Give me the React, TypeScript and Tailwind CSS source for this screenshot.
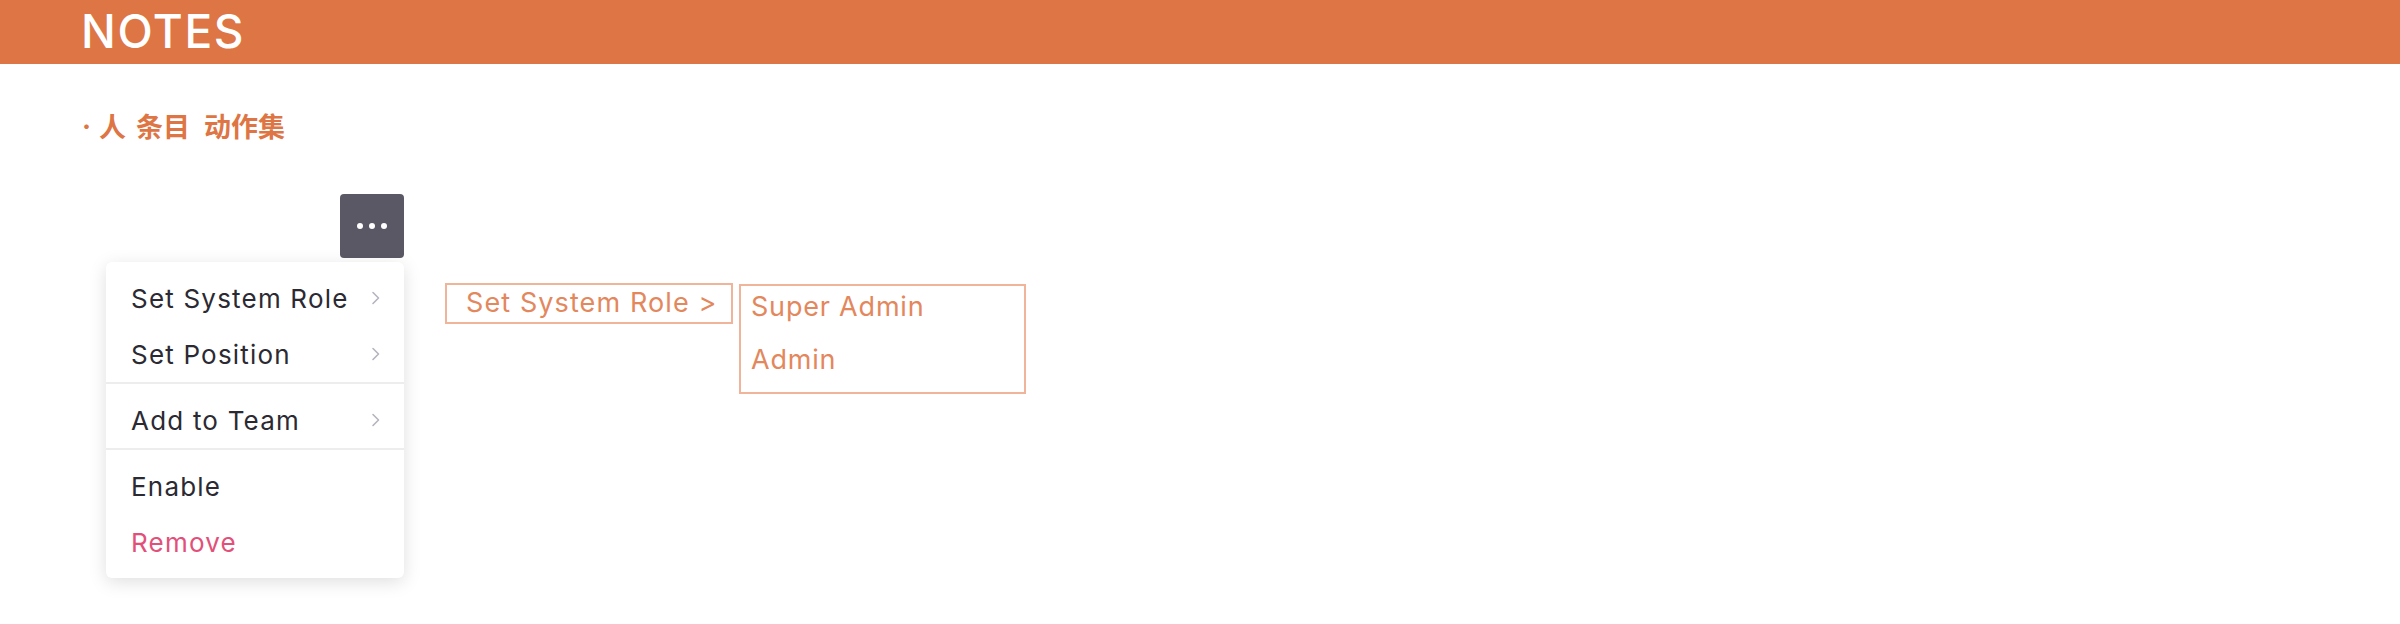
import React from "react";

const latin = { fontFamily: "Inter, 'Noto Sans CJK SC', sans-serif" };

function Chevron() {
  return (
    <svg width="10" height="14" viewBox="0 0 10 14" fill="none">
      <path d="M2 1.5 L7.5 7 L2 12.5" stroke="#B6B5BF" strokeWidth="1.6" strokeLinecap="round" strokeLinejoin="round" />
    </svg>
  );
}

function Item({ label, sub, danger }: { label: string; sub?: boolean; danger?: boolean }) {
  return (
    <div className="flex h-[56px] items-center justify-between pl-[25px] pr-[23px]">
      <span className={`text-[26px] tracking-[1.2px] ${danger ? "text-[#E2507A]" : "text-[#2B2A33]"}`}>{label}</span>
      {sub && <Chevron />}
    </div>
  );
}

export default function App() {
  return (
    <div className="min-h-[624px] w-full bg-white" style={latin}>
      <div className="flex h-[64px] items-center bg-[#DE7544] pl-[81px]">
        <span className="-mt-[3px] text-[46px] font-medium leading-none tracking-[1.6px] text-white">NOTES</span>
      </div>
      <div className="pl-[82px]">
        <div className="mt-[42px] flex h-[40px] items-center text-[27px] font-bold leading-[40px] text-[#DE7544]">
          <span className="mr-[8px] leading-none">·</span>
          <span style={{ fontFamily: "'Noto Sans CJK SC', sans-serif" }}>人</span>
          <span className="ml-[10px]" style={{ fontFamily: "'Noto Sans CJK SC', sans-serif" }}>条目</span>
          <span className="ml-[14px]" style={{ fontFamily: "'Noto Sans CJK SC', sans-serif" }}>动作集</span>
        </div>
        <div className="mt-[48px] flex items-start">
          <div className="flex w-[322px] flex-col items-end">
            <button className="flex h-[64px] w-[64px] items-center justify-center gap-[6px] rounded-[4px] bg-[#5A5864]">
              <span className="h-[6px] w-[6px] rounded-full bg-white" />
              <span className="h-[6px] w-[6px] rounded-full bg-white" />
              <span className="h-[6px] w-[6px] rounded-full bg-white" />
            </button>
            <div className="mt-[4px] w-[298px] rounded-[6px] bg-white pb-[8px] shadow-[0_4px_18px_rgba(0,0,0,0.13)]">
              <div className="pt-[8px]">
                <Item label="Set System Role" sub />
                <Item label="Set Position" sub />
              </div>
              <div className="border-t-2 border-[#EDEDED] pt-[8px]">
                <Item label="Add to Team" sub />
              </div>
              <div className="border-t-2 border-[#EDEDED] pt-[8px]">
                <Item label="Enable" />
                <Item label="Remove" danger />
              </div>
            </div>
          </div>
          <div className="ml-[41px] mt-[89px] flex h-[41px] w-[288px] items-center border-2 border-[#F0B49B] pl-[19px] text-[27px] tracking-[1.1px] text-[#E3875D]">
            Set System Role &gt;
          </div>
          <div className="ml-[6px] mt-[90px] flex h-[110px] w-[287px] flex-col gap-[17px] border-2 border-[#F0B49B] pl-[10px] pt-[3px] text-[27px] tracking-[0.8px] text-[#E3875D]">
            <div className="leading-[36px]">Super Admin</div>
            <div className="leading-[36px]">Admin</div>
          </div>
        </div>
      </div>
    </div>
  );
}
